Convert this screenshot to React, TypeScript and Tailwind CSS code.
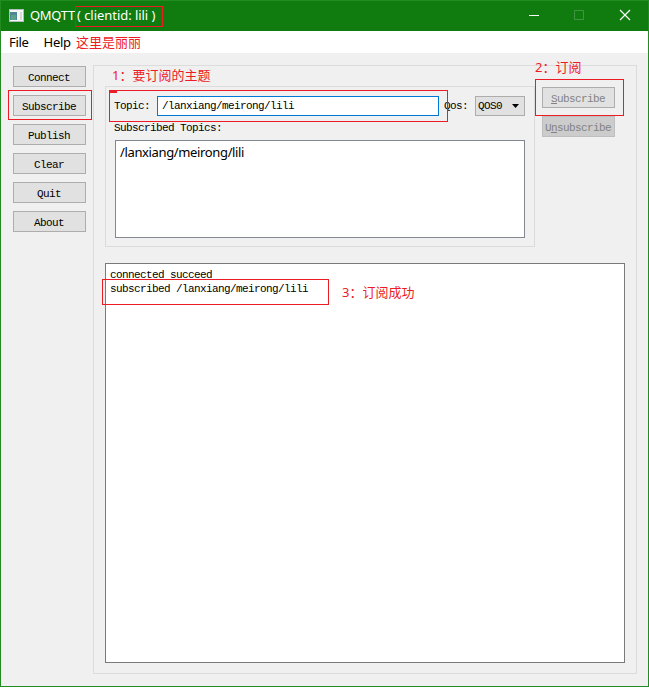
import type { ReactNode } from "react";
import { clsx } from "clsx";

const MENU_ITEMS = ["File", "Help"];
const SIDE_BUTTONS = ["Connect", "Subscribe", "Publish", "Clear", "Quit", "About"];
const LOG_LINES = ["connected succeed", "subscribed /lanxiang/meirong/lili"];
const TOPIC = "/lanxiang/meirong/lili";

const MONO = "font-['Liberation_Mono','Noto_Sans_CJK_SC',monospace] text-[11px] tracking-[-0.6px]";

type ButtonProps = {
  children: ReactNode;
  className?: string;
  disabled?: boolean;
};

function PushButton({ children, className, disabled }: ButtonProps) {
  return (
    <button
      type="button"
      disabled={disabled}
      className={clsx(
        "flex h-[21px] w-[73px] items-center justify-center border pt-0.5 pr-px leading-4 whitespace-pre",
        MONO,
        className ?? "border-[#adadad] bg-[#e1e1e1] text-black"
      )}
    >
      {children}
    </button>
  );
}

function Note({ children, className }: { children: ReactNode; className: string }) {
  return (
    <div
      className={clsx(
        "absolute text-[13px] leading-4 whitespace-pre text-[#ed1c24]",
        className
      )}
    >
      {children}
    </div>
  );
}

function Outline({ className }: { className: string }) {
  return <div className={clsx("pointer-events-none absolute border border-[#ed1c24]", className)} />;
}

function TitleBar() {
  return (
    <header className="flex h-[30px] shrink-0 items-center bg-[#107c10] text-[13px] text-white">
      <svg className="-mt-px ml-2 h-[13px] w-[15px]" viewBox="0 0 15 13" shapeRendering="crispEdges">
        <rect width="15" height="13" fill="#b4bcc0" />
        <rect x="1" y="1" width="13" height="11" fill="#f4f6f7" />
        <rect x="1" y="3" width="7" height="8" fill="#4d8791" />
        <rect x="2" y="6" width="5" height="5" fill="#5aa08a" />
        <rect x="11" y="3" width="2" height="8" fill="#d3d8db" />
      </svg>
      <div className="ml-[6px] w-[47px] tracking-[-0.3px]">QMQTT</div>
      <div className="tracking-[-0.05px] whitespace-pre">( clientid: lili )</div>
      <svg
        className="-mt-0.5 mr-[17px] ml-auto h-[12px] w-[104px]"
        viewBox="0 0 104 12"
        fill="none"
        stroke="white"
      >
        <path d="M2 6.5h10" />
        <path d="M47.5 1.5h9v9h-9z" stroke="#409640" />
        <path d="M93 1l10 10M103 1L93 11" strokeWidth="1.2" />
      </svg>
    </header>
  );
}

function TopicForm() {
  return (
    <section className="h-[161px] w-[430px] border border-[#dcdcdc] px-[9px] pt-[9px]">
      <div className={clsx("flex h-5 items-center", MONO)}>
        <label className="-ml-px w-[43px]">Topic:</label>
        <div className="flex h-5 w-[282px] items-center border border-[#0078d7] bg-white pl-1">
          {TOPIC}
        </div>
        <label className="ml-[5px] w-[31px]">Qos:</label>
        <div className="flex h-5 w-[50px] items-center justify-between border border-[#adadad] bg-[#e1e1e1] pr-[5px] pl-[2px]">
          QOS0
          <svg className="h-1 w-[7px]" viewBox="0 0 7 4">
            <path d="M0 0h7L3.5 4z" />
          </svg>
        </div>
      </div>
      <div className={clsx("mt-[5px] -ml-px h-[19px] leading-[14px]", MONO)}>Subscribed Topics:</div>
      <div className="h-[98px] border border-[#828790] bg-white px-1 pt-[3px] text-[13px] leading-4 tracking-[-0.36px]">
        {TOPIC}
      </div>
    </section>
  );
}

export default function App() {
  return (
    <div className="h-[689px] w-[649px] bg-white font-['Noto_Sans','Noto_Sans_CJK_SC',sans-serif]">
      <div className="relative flex h-[687px] flex-col border border-[#228b22] bg-[#f0f0f0] text-black">
        <TitleBar />
        <nav className="flex h-[22px] shrink-0 items-center gap-[15px] bg-white pt-0.5 pl-2 text-[13px] tracking-[-0.3px]">
          {MENU_ITEMS.map((item) => (
            <span key={item}>{item}</span>
          ))}
        </nav>

        <div className="flex pt-3 pl-3">
          <aside className="flex flex-col gap-2 pt-px">
            {SIDE_BUTTONS.map((label) => (
              <PushButton key={label}>{label}</PushButton>
            ))}
          </aside>

          <main className="ml-[7px] h-[609px] w-[544px] border border-[#dcdcdc] px-[11px] pt-5">
            <div className="flex">
              <TopicForm />
              <div className="ml-[7px] flex flex-col gap-2 pt-px">
                <PushButton disabled className="border-[#adadad] bg-[#e1e1e1] text-[#838383]">
                  <span className="underline">S</span>ubscribe
                </PushButton>
                <PushButton disabled className="border-[#bfbfbf] bg-[#cccccc] text-[#838383]">
                  U<span className="underline">n</span>subscribe
                </PushButton>
              </div>
            </div>
            <div
              className={clsx(
                "mt-4 h-[400px] w-[520px] border border-[#7a7a7a] bg-white pt-1 pl-1 leading-[14px]",
                MONO
              )}
            >
              {LOG_LINES.map((line) => (
                <div key={line}>{line}</div>
              ))}
            </div>
          </main>
        </div>

        <Outline className="top-[5px] left-[74px] h-[21px] w-[88px]" />
        <Outline className="top-[89px] left-[7px] h-[30px] w-[84px]" />
        <Outline className="top-[89px] left-[108px] h-8 w-[339px]" />
        <div className="absolute top-[89px] left-[108px] h-[3px] w-2 bg-[#ed1c24]" />
        <Outline className="top-[78px] left-[534px] h-[37px] w-[89px]" />
        <Outline className="top-[278px] left-[101px] h-[26px] w-[227px]" />
        <Note className="top-[33px] left-[75px]">这里是丽丽</Note>
        <Note className="top-[66px] left-[111px]">1：要订阅的主题</Note>
        <Note className="top-[58px] left-[534px]">2：订阅</Note>
        <Note className="top-[283px] left-[341px]">3：订阅成功</Note>
      </div>
    </div>
  );
}
